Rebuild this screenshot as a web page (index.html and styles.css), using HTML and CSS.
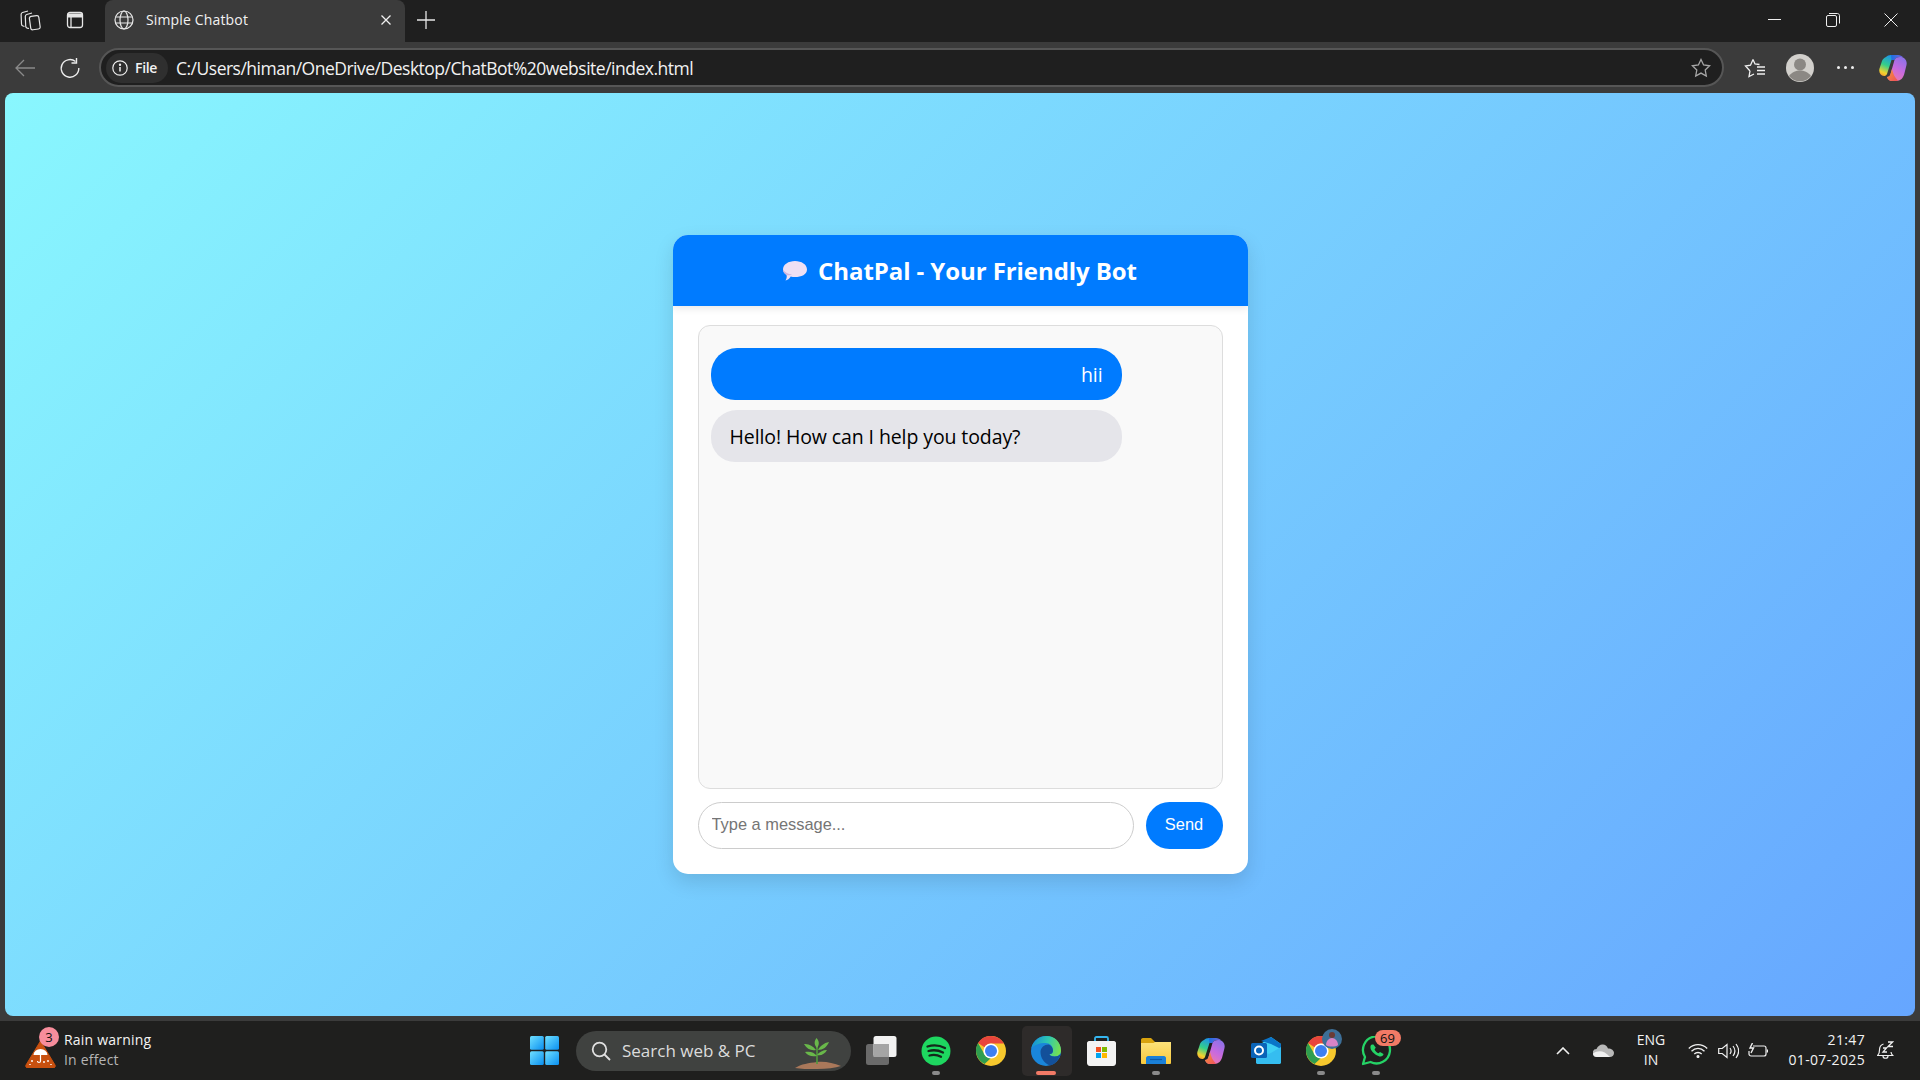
FILE: index.html
```html
<!DOCTYPE html>
<html lang="en">
<head>
<meta charset="utf-8">
<title>Simple Chatbot</title>
<link rel="stylesheet" href="styles.css">
</head>
<body>
<svg class="defs" width="0" height="0" aria-hidden="true">
  <defs>
    <linearGradient id="copA" x1=".6" y1="0" x2=".2" y2="1"><stop offset="0" stop-color="#1c8fee"/><stop offset=".5" stop-color="#34cf8a"/><stop offset=".85" stop-color="#f2d32e"/><stop offset="1" stop-color="#f7a030"/></linearGradient>
    <linearGradient id="copB" x1=".8" y1="0" x2=".3" y2="1"><stop offset="0" stop-color="#8a72e8"/><stop offset=".5" stop-color="#c66ae0"/><stop offset="1" stop-color="#f07aa8"/></linearGradient>
    <linearGradient id="copC" x1="0" y1="0" x2="1" y2="1"><stop offset="0" stop-color="#f79a33"/><stop offset="1" stop-color="#ee4f5e"/></linearGradient>
    <linearGradient id="copD" x1="0" y1="0" x2="1" y2="0"><stop offset="0" stop-color="#1c6fe0"/><stop offset="1" stop-color="#7a62e0"/></linearGradient>
    <linearGradient id="winG" x1="0" y1="0" x2="1" y2="1"><stop offset="0" stop-color="#6fe0ff"/><stop offset="1" stop-color="#0a8ff0"/></linearGradient>
    <linearGradient id="edgeG" x1="0" y1=".4" x2="1" y2=".6"><stop offset="0" stop-color="#1590d8"/><stop offset=".5" stop-color="#2ec8b0"/><stop offset="1" stop-color="#78e04e"/></linearGradient>
    <linearGradient id="foldG" x1="0" y1="0" x2="0" y2="1"><stop offset="0" stop-color="#fde27a"/><stop offset="1" stop-color="#f8c93c"/></linearGradient>
    <symbol id="copilot" viewBox="0 0 28 26">
      <path d="M7 2C8 .8 10 0 12 0H19L12.500 5 8 19C7.200 20.500 6.500 21 5 21 1.500 20.500-.5 17.500.5 13.500L3 6C3.700 4.300 5 3 7 2z" fill="url(#copA)"/>
      <path d="M12 0H19C21 0 23 .8 24.500 3 23 2.300 22 2 21 2 18 2 16.500 3 15.500 5H12.500z" fill="url(#copD)"/>
      <path d="M15.500 5C16.500 3 18 2 21 2 25.500 2 28.500 5.500 27.500 10L25.500 18C24.500 23 21.500 26 17 26H13C10.500 26 9 24.500 8 22 10 22 11 21 11.500 19z" fill="url(#copB)"/>
      <path d="M8 22C10 22 11 21 11.500 19L13 14C14 19 16 23 19 25.500 18 26 17.500 26 17 26H13C10.500 26 9 24.500 8 22z" fill="url(#copC)"/>
    </symbol>
    <symbol id="chrome" viewBox="0 0 30 30">
      <circle cx="15" cy="15" r="15" fill="#f7c82d"/>
      <path d="M15 0a15 15 0 0 1 13 7.500H15a7.500 7.500 0 0 0-6.500 3.750L2 7A15 15 0 0 1 15 0z" fill="#e8453c"/>
      <path d="M2 7l6.500 11.250a7.500 7.500 0 0 0 6.500 3.750L8.500 28A15 15 0 0 1 2 7z" fill="#2f9e4f"/>
      <circle cx="15" cy="15" r="7.600" fill="#fff"/>
      <circle cx="15" cy="15" r="6" fill="#3d7ff0"/>
    </symbol>
  </defs>
</svg>

<header class="tabstrip">
  <div class="strip-left">
    <span class="strip-btn"><svg width="22" height="21" viewBox="0 0 22 21" fill="none" stroke="#e6e6e6" stroke-width="1.200" stroke-linejoin="round"><rect x="11" y="6" width="9.500" height="13.500" rx="2" transform="rotate(-8 15.500 12.500)"/><path d="M10 18.500l-1.800-.4c-1-.3-1.500-1-1.500-2L6.300 6.500c0-1 .4-1.700 1.400-2L13 3"/><path d="M5.500 16.500l-1.500-.5c-1-.3-1.500-1-1.500-2L2.100 4.500c0-1 .4-1.700 1.400-2L9 1"/></svg></span>
    <span class="strip-btn"><svg width="18" height="18" viewBox="0 0 18 18" fill="none" stroke="#e6e6e6" stroke-width="1.300"><rect x="1.500" y="1.500" width="15" height="15" rx="2.500"/><path d="M1.500 4.500h15" stroke-width="4"/><path d="M5 5v11.500"/></svg></span>
  </div>
  <div class="tab">
    <svg class="globe" width="20" height="20" viewBox="0 0 20 20" fill="none" stroke="#e8e8e8" stroke-width="1.200"><circle cx="10" cy="10" r="9"/><ellipse cx="10" cy="10" rx="4" ry="9"/><path d="M1.800 7h16.400M1.800 13h16.400"/></svg>
    <span class="tab-title">Simple Chatbot</span>
    <svg width="12" height="12" viewBox="0 0 12 12" stroke="#f0f0f0" stroke-width="1.300"><path d="M1.500 1.500l9 9M10.500 1.500l-9 9"/></svg>
  </div>
  <span class="newtab"><svg width="18" height="18" viewBox="0 0 18 18" stroke="#e6e6e6" stroke-width="1.300"><path d="M9 0v18M0 9h18"/></svg></span>
  <div class="winctl">
    <span class="winbtn"><svg width="14" height="14" viewBox="0 0 14 14" stroke="#eee" stroke-width="1"><path d="M0 6.500h13"/></svg></span>
    <span class="winbtn"><svg width="14" height="14" viewBox="0 0 14 14" fill="none" stroke="#eee" stroke-width="1"><rect x=".5" y="2.500" width="10" height="11" rx="1.500"/><path d="M3 .5h8.500c1 0 2 1 2 2v8"/></svg></span>
    <span class="winbtn"><svg width="14" height="14" viewBox="0 0 14 14" stroke="#eee" stroke-width="1"><path d="M.5.500l13 13M13.500.500l-13 13"/></svg></span>
  </div>
</header>

<nav class="toolbar">
  <span class="nav-btn"><svg width="20" height="18" viewBox="0 0 20 18" fill="none" stroke="#8a8a8a" stroke-width="1.300"><path d="M20 9H1M9 1L1 9l8 8"/></svg></span>
  <span class="nav-btn"><svg width="22" height="22" viewBox="0 0 22 22" fill="none" stroke="#ececec" stroke-width="1.400"><path d="M16.500 4.500A8.800 8.800 0 1 0 19.800 11"/><path d="M17.500 1v5h-5"/></svg></span>
  <div class="address">
    <span class="chip">
      <svg width="16" height="16" viewBox="0 0 16 16" fill="none" stroke="#eee" stroke-width="1.200"><circle cx="8" cy="8" r="7.200"/><path d="M8 7v4.500" stroke-width="1.500"/><circle cx="8" cy="4.700" r=".6" fill="#eee"/></svg>
      <b class="chip-text">File</b>
    </span>
    <span class="url">C:/Users/himan/OneDrive/Desktop/ChatBot%20website/index.html</span>
    <svg class="star" width="20" height="20" viewBox="0 0 20 20" fill="none" stroke="#a8a8a8" stroke-width="1.300"><path d="M10 1.500l2.600 5.500 6 .8-4.400 4.200 1.100 6L10 15.100 4.700 18l1.100-6L1.400 7.800l6-.8z"/></svg>
  </div>
  <div class="tools">
    <span class="tool tool-fav"><svg width="22" height="20" viewBox="0 0 22 20" fill="none" stroke="#f0f0f0" stroke-width="1.300"><path d="M9 1.500l2 4.500 4.500.5M6 13l-4.500-5 5-.8L9 1.500M6 13l-1 5.500 5-2.500"/><path d="M13 9h8M13 12.500h8M13 16h8"/></svg></span>
    <span class="tool tool-prof"><svg width="28" height="28" viewBox="0 0 28 28"><circle cx="14" cy="14" r="14" fill="#d2d0cc"/><circle cx="14" cy="10.500" r="6" fill="#8b8884"/><path d="M3 22c3-4 7-5.500 11-5.500s8 1.500 11 5.500a14 14 0 0 1-22 0z" fill="#8b8884"/></svg></span>
    <span class="tool tool-more"><i class="dot"></i><i class="dot"></i><i class="dot"></i></span>
    <span class="tool tool-cop"><svg width="28" height="26"><use href="#copilot"/></svg></span>
  </div>
</nav>

<main class="viewport">
  <section class="card">
    <h1 class="card-head">
      <svg class="balloon" width="24" height="20" viewBox="0 0 24 20"><path d="M12 0c6.500 0 12 3.500 12 8.500S18.500 16 12 16c-1.500 0-3-.2-4.300-.6C6.500 17.500 4.500 19 2.500 19.500 3.800 17.500 4 15.500 3.500 14 1.300 12.500 0 10.600 0 8.500 0 3.500 5.500 0 12 0z" fill="#eee0f4"/><path d="M3.500 14C1.300 12.500 0 10.600 0 8.500c2 3 5 4.500 9 5-1 .5-3 1-5.500.5z" fill="#cfb6de"/></svg>
      <span>ChatPal - Your Friendly Bot</span>
    </h1>
    <div class="card-body">
      <div class="messages">
        <div class="bubble bubble-user">hii</div>
        <div class="bubble bubble-bot">Hello! How can I help you today?</div>
      </div>
      <form class="composer">
        <input class="composer-input" type="text" placeholder="Type a message...">
        <button class="composer-send" type="button">Send</button>
      </form>
    </div>
  </section>
</main>

<div class="frame-foot"></div>

<footer class="taskbar">
  <div class="widget">
    <span class="widget-icon">
      <svg width="31" height="28" viewBox="0 0 31 28"><path d="M15.500 1L30 25c.6 1.500 0 3-2 3H3c-2 0-2.600-1.500-2-3z" fill="#c8500f" stroke="#c8500f" stroke-linejoin="round"/><path d="M8.500 15a7 6 0 0 1 14 0z" fill="#fff"/><path d="M15.500 15v6c0 2-3 2-3 0" fill="none" stroke="#fff" stroke-width="1.200"/><path d="M7 20v2M23 20v2M5 24v1M26 24v1M19 21v2" stroke="#fff" stroke-width="1.400"/></svg>
      <span class="widget-badge">3</span>
    </span>
    <span class="widget-text">
      <span class="widget-title">Rain warning</span>
      <span class="widget-sub">In effect</span>
    </span>
  </div>

  <div class="apps">
    <span class="app"><svg width="30" height="30" viewBox="0 0 30 30"><rect width="13.800" height="13.800" rx="1.500" fill="url(#winG)"/><rect x="15.200" width="13.800" height="13.800" rx="1.500" fill="url(#winG)"/><rect y="15.200" width="13.800" height="13.800" rx="1.500" fill="url(#winG)"/><rect x="15.200" y="15.200" width="13.800" height="13.800" rx="1.500" fill="url(#winG)"/></svg></span>
    <div class="search">
      <svg width="20" height="20" viewBox="0 0 20 20" fill="none" stroke="#e0e0e0" stroke-width="1.800"><circle cx="8.500" cy="8.500" r="6.800"/><path d="M13.500 13.500l5.500 5.500"/></svg>
      <span class="search-text">Search web &amp; PC</span>
      <svg class="sprout" width="46" height="32" viewBox="0 0 46 32"><path d="M0 31c6-4 14-5 22-6s16 1 24 4c-6 2-14 3-24 3S6 32 0 31z" fill="#a9785a"/><path d="M22 27V6" stroke="#4f9a3a" stroke-width="1.600"/><path d="M21.500 1c3 3 3 7 .5 10-3-3-3-7-.5-10zM9 7c5-.5 9 2 12 6-5 1-9-1-12-6zM34 5c-5 1-9 4-11 8 5 0 9-3 11-8zM10 15c5-1 9 0 12 4-5 1-9 0-12-4zM32 13c-4 0-8 2-10 5 4 1 8-1 10-5z" fill="#69b84a"/></svg>
    </div>
    <span class="app app-view"><svg width="31" height="29" viewBox="0 0 31 29"><rect x="0" y="8" width="23" height="21" rx="2.500" fill="#6a6a6a"/><rect x="7.500" y="0" width="23" height="21" rx="2.500" fill="#f2f2f2"/><rect x="7.500" y="8" width="15.500" height="13" fill="#a5a5a5"/></svg></span>
    <span class="app"><svg width="30" height="30" viewBox="0 0 30 30"><circle cx="15" cy="15" r="14.500" fill="#1ed760"/><path d="M6.500 10.500c6-1.800 12-1.300 17.500 1.500M7.500 15c5-1.300 10-.8 14.500 1.500M8.500 19.500c4-1 8-.6 11.500 1.300" fill="none" stroke="#14281b" stroke-width="2.300" stroke-linecap="round"/></svg><i class="pip"></i></span>
    <span class="app"><svg width="30" height="30"><use href="#chrome"/></svg></span>
    <span class="app app-active"><svg width="30" height="30" viewBox="0 0 30 30"><circle cx="15" cy="15" r="15" fill="#1a86da"/><path d="M.3 12.500C2 5 8 0 15.500 0 23.500 0 30 6 30 14.500c0 4-3 6-6.500 6-3 0-5-1-5-2.500 2 .5 3.500-1 3.500-3.500C22 10 19 7 14.500 7 8.500 7 2.500 9 .3 12.500z" fill="url(#edgeG)"/><path d="M9.500 16c0-4.500 4-7.500 8-7.500 3 1 4.500 3.500 4.500 6 0 2.500-1.500 4-3.500 3.500 0 1.500 2 2.500 5 2.500 2.500 0 4.500-.8 6.200-2.500C28 24 23.500 28.500 19 29.500 13 27.500 9.500 21.500 9.500 16z" fill="#13509a"/></svg><i class="pip pip-active"></i></span>
    <span class="app"><svg width="29" height="30" viewBox="0 0 29 30"><path d="M8 6V2.500c0-1 .5-1.500 1.500-1.500h10c1 0 1.500.5 1.500 1.500V6" fill="none" stroke="#35b6f0" stroke-width="1.800"/><path d="M2 5h25c1 0 2 1 2 2v20c0 1.500-1 3-3 3H3c-2 0-3-1.500-3-3V7c0-1 1-2 2-2z" fill="#f3f3f3"/><rect x="9" y="11" width="5" height="5" fill="#f25022"/><rect x="15" y="11" width="5" height="5" fill="#7fba00"/><rect x="9" y="17" width="5" height="5" fill="#00a4ef"/><rect x="15" y="17" width="5" height="5" fill="#ffb900"/></svg></span>
    <span class="app"><svg width="30" height="26" viewBox="0 0 30 26"><path d="M0 2c0-1 .5-2 2-2h8l4 4h14c1 0 2 .5 2 2v4H0z" fill="#d9a30e"/><path d="M0 5h12.500L14 4h16v21c0 .5-.5 1-1 1H1c-.5 0-1-.5-1-1z" fill="url(#foldG)"/><path d="M5 26v-6c0-1 1-2 2-2h16c1 0 2 1 2 2v6z" fill="#1a80d8"/><path d="M9 21.500h12" stroke="#0d5aa8" stroke-width="1.200"/></svg><i class="pip"></i></span>
    <span class="app"><svg width="28" height="26"><use href="#copilot"/></svg></span>
    <span class="app"><svg width="31" height="27" viewBox="0 0 31 27"><path d="M5 10L20 0l10 7v18c0 1-1 2-2 2H7c-1 0-2-1-2-2z" fill="#3fd0f5"/><path d="M10 4l10-4 10 7v5l-10-5z" fill="#0a74c8"/><path d="M30 10L18 17 5 12v13c0 1 1 2 2 2h21c1 0 2-1 2-2z" fill="#35bdf0"/><rect x="0" y="6" width="16" height="15" rx="1.500" fill="#0a64b8"/><circle cx="8" cy="13.500" r="4" fill="none" stroke="#fff" stroke-width="2"/></svg></span>
    <span class="app"><svg width="30" height="30"><use href="#chrome"/></svg><span class="avatar"><svg width="20" height="20" viewBox="0 0 20 20"><circle cx="10" cy="10" r="10" fill="#3d6f98"/><circle cx="10" cy="6" r="3" fill="#6b3b35"/><path d="M4 16c0-4 3-7 6-7s6 3 6 7c-2 2-10 2-12 0z" fill="#d884c6"/></svg></span><i class="pip"></i></span>
    <span class="app"><svg width="31" height="30" viewBox="0 0 31 30" fill="none"><path d="M2 28l2-7A13.500 13.500 0 1 1 9.500 26z" stroke="#25d366" stroke-width="2.300" stroke-linejoin="round"/><path d="M10 9c-1 1.500-.8 4 1.200 6.500S17 20.500 19.500 20.500c1.500 0 3-1 3-2.500l-3.500-2-1.500 1.300c-1.500-.5-3.500-2.500-4-4l1.300-1.500L12.500 8.500c-1 0-2 0-2.500.5z" fill="#25d366"/></svg><span class="count">69</span><i class="pip"></i></span>
  </div>

  <div class="tray">
    <span class="tray-cell tray-chev"><svg width="14" height="8" viewBox="0 0 14 8" fill="none" stroke="#f0f0f0" stroke-width="1.600"><path d="M1 7l6-6 6 6"/></svg></span>
    <span class="tray-cell tray-cloud"><svg width="21" height="13" viewBox="0 0 21 13"><path d="M4 13a4 4 0 0 1-.5-8C5 1.500 8 0 10 .5c2 0 4 1.500 5 4 3.500 0 6 2 6 4.500s-2 4-4 4z" fill="#b8b8b8"/><path d="M4 13c-2 0-4-1.500-4-3.500 5-3.500 11-3.500 17 3.500z" fill="#f0f0f0"/></svg></span>
    <span class="tray-cell tray-lang"><span>ENG</span><span>IN</span></span>
    <span class="tray-cell tray-net"><svg width="20" height="15" viewBox="0 0 20 15" fill="none" stroke="#f0f0f0" stroke-width="1.300"><path d="M.8 5.500C6 .3 14 .3 19.200 5.500M3.500 8.200C7.200 4.500 12.800 4.500 16.500 8.200M6.300 11c2-2 5.400-2 7.400 0"/><circle cx="10" cy="13.500" r=".9" fill="#f0f0f0"/></svg></span>
    <span class="tray-cell tray-vol"><svg width="21" height="16" viewBox="0 0 21 16" fill="none" stroke="#f0f0f0" stroke-width="1.200"><path d="M.7 5.500h3.500L9 1.500v13l-4.800-4H.7z"/><path d="M12 5c1.300 1.800 1.300 4.200 0 6M15 3c2.300 3 2.300 7 0 10M18 1c3.400 4.500 3.400 9.500 0 14"/></svg></span>
    <span class="tray-cell tray-bat"><svg width="20" height="16" viewBox="0 0 20 16" fill="none" stroke="#f0f0f0" stroke-width="1.200"><path d="M5 3h11c1 0 2 1 2 2v6c0 1-1 2-2 2H3c-1 0-2-1-2-2V8"/><path d="M19.500 6.500v3" stroke-width="1.500"/><path d="M4.500 0L2 5h3.500L3 10" stroke-width="1.400"/></svg></span>
    <span class="tray-cell tray-clock"><span>21:47</span><span>01-07-2025</span></span>
    <span class="tray-cell tray-bell"><svg width="17" height="19" viewBox="0 0 17 19" fill="none" stroke="#f0f0f0" stroke-width="1.200"><path d="M6.500 3C3 4 2.500 7 2.500 9c0 3-.8 4.500-1.800 5.500h15c-1-1-1.500-2-1.700-3.500M6 15c0 3 5 3 5 0"/><path d="M6 7h3.500L6 11h4M11 1h4.500L11 5.500h5" stroke-width="1.300"/></svg></span>
  </div>
</footer>
</body>
</html>
```

FILE: styles.css
```css
* { box-sizing: border-box; }

html, body {
  margin: 0;
  height: 1080px;
  overflow: hidden;
}

body {
  display: flex;
  flex-direction: column;
  background: #3b3b3b;
  font-family: "Open Sans", "Noto Sans", sans-serif;
  color: #fff;
}

.defs { position: absolute; }

/* tab strip */
.tabstrip {
  height: 42px;
  flex: none;
  display: flex;
  align-items: center;
  background: #1f1f1f;
}

.strip-left {
  width: 105px;
  padding-left: 8px;
  padding-bottom: 2px;
  display: flex;
  gap: 1px;
}

.strip-btn {
  width: 44px;
  height: 30px;
  display: flex;
  align-items: center;
  justify-content: center;
}

.tab {
  width: 300px;
  height: 42px;
  background: #3b3b3b;
  border-radius: 8px 8px 0 0;
  display: flex;
  align-items: center;
  padding: 0 13px 3px 9px;
}

.tab-title {
  flex: 1;
  margin-left: 12px;
  font-size: 14px;
  letter-spacing: .15px;
  color: #f2f2f2;
}

.newtab {
  margin-left: 12px;
  padding-bottom: 2px;
  display: flex;
}

.winctl {
  margin-left: auto;
  display: flex;
}

.winbtn {
  width: 58px;
  height: 42px;
  padding-bottom: 2px;
  display: flex;
  align-items: center;
  justify-content: center;
}

/* toolbar */
.toolbar {
  height: 51px;
  flex: none;
  display: flex;
  align-items: center;
  padding: 0 7px 0 3px;
}

.nav-btn {
  width: 44px;
  margin-right: 1px;
  display: flex;
  justify-content: center;
}

.address {
  width: 1625px;
  height: 39px;
  margin-left: 6px;
  border: 2px solid #565656;
  border-radius: 20px;
  background: #1f1f1f;
  display: flex;
  align-items: center;
  padding: 0 11px 0 5px;
}

.chip {
  width: 62px;
  height: 30px;
  border-radius: 15px;
  background: #2f2f2f;
  display: flex;
  align-items: center;
  gap: 7px;
  padding-left: 6px;
}

.chip-text {
  font-size: 14px;
  font-weight: 600;
  letter-spacing: -.3px;
  color: #f2f2f2;
}

.url {
  flex: 1;
  margin-left: 8px;
  font-size: 17.500px;
  letter-spacing: -.5px;
  color: #f2f2f2;
  white-space: nowrap;
}

.tools {
  display: flex;
  align-items: center;
}

.tool {
  display: flex;
  align-items: center;
  justify-content: center;
}

.tool-fav { width: 22px; margin-left: 20px; }
.tool-prof { width: 28px; margin-left: 20px; }
.tool-more { width: 20px; margin-left: 21px; gap: 4px; }
.tool-cop { width: 28px; margin-left: 24px; }

.dot {
  width: 3px;
  height: 3px;
  border-radius: 50%;
  background: #eee;
}

/* page area */
.viewport {
  height: 923px;
  flex: none;
  margin: 0 5px;
  border-radius: 8px;
  background: linear-gradient(135deg, #89f7fe, #66a6ff);
  display: flex;
  align-items: center;
  justify-content: center;
}

.frame-foot {
  height: 5px;
  flex: none;
}

.card {
  width: 575px;
  height: 639px;
  background: #fff;
  border-radius: 15px;
  box-shadow: 0 8px 20px rgba(0, 0, 0, .12);
  display: flex;
  flex-direction: column;
  overflow: hidden;
}

.card-head {
  height: 71px;
  flex: none;
  margin: 0;
  background: #007bff;
  box-shadow: 0 2px 8px rgba(0, 0, 0, .1);
  display: flex;
  align-items: center;
  justify-content: center;
  gap: 11px;
  font-size: 24px;
  font-weight: 700;
  letter-spacing: -.08px;
  color: #fff;
}

.card-body {
  flex: 1;
  display: flex;
  flex-direction: column;
  padding: 19px 25px 25px;
}

.messages {
  flex: 1;
  background: #f9f9f9;
  border: 1px solid #ddd;
  border-radius: 12px;
  padding: 22px 12px;
  display: flex;
  flex-direction: column;
  gap: 10px;
}

.bubble {
  width: 411px;
  height: 52px;
  padding: 1px 19px 0;
  border-radius: 26px 26px 24px 24px;
  font-size: 19.500px;
  line-height: 52px;
  letter-spacing: -.1px;
}

.bubble-user {
  background: #007bff;
  color: #fff;
  text-align: right;
}

.bubble-bot {
  background: #e5e5ea;
  color: #000;
}

.composer {
  margin: 13px 0 0;
  display: flex;
  gap: 12px;
}

.composer-input {
  flex: 1;
  min-width: 0;
  height: 47px;
  padding: 0 13px 2px;
  border: 1px solid #ccc;
  border-radius: 24px;
  background: #fff;
  font-family: "Liberation Sans", Arial, sans-serif;
  font-size: 16.400px;
}

.composer-input::placeholder { color: #757575; }

.composer-send {
  width: 77px;
  height: 47px;
  border: 0;
  border-radius: 24px;
  background: #007bff;
  color: #fff;
  font-family: "Liberation Sans", Arial, sans-serif;
  font-size: 16.400px;
  padding: 0 0 2px;
}

/* taskbar */
.taskbar {
  height: 59px;
  flex: none;
  background: #1f1f1e;
  display: flex;
  align-items: center;
}

.widget {
  width: 517px;
  padding-left: 25px;
  display: flex;
  align-items: center;
  gap: 8px;
}

.widget-icon {
  position: relative;
  display: flex;
  width: 31px;
  height: 28px;
  top: 3px;
}

.widget-badge {
  position: absolute;
  left: 14px;
  top: -13px;
  width: 20px;
  height: 20px;
  border-radius: 50%;
  background: #f78d9c;
  color: #111;
  font-size: 13px;
  line-height: 20px;
  text-align: center;
}

.widget-text {
  display: flex;
  flex-direction: column;
  padding-bottom: 2px;
  font-size: 14px;
  line-height: 20px;
  letter-spacing: .2px;
}

.widget-title { color: #f4f4f4; }
.widget-sub { color: #b5b5b5; }

.apps {
  display: flex;
  align-items: center;
  height: 59px;
}

.app {
  position: relative;
  width: 55px;
  height: 50px;
  display: flex;
  align-items: center;
  justify-content: center;
}

.app-view { margin-left: 2.500px; }

.app-active::before {
  content: "";
  position: absolute;
  left: 3px;
  right: 2px;
  top: 0;
  bottom: 0;
  background: #2e2b2a;
  border-radius: 5px;
}

.app-active > svg { position: relative; }

.pip {
  position: absolute;
  left: 50%;
  bottom: 1px;
  margin-left: -4px;
  width: 8px;
  height: 4px;
  border-radius: 2px;
  background: #8a8a8a;
}

.pip-active {
  margin-left: -10px;
  width: 20px;
  background: #f27a66;
}

.count {
  position: absolute;
  left: 26px;
  top: 4px;
  width: 26px;
  height: 16px;
  border-radius: 8px;
  background: #f27a66;
  color: #111;
  font-size: 13px;
  line-height: 16px;
  text-align: center;
}

.avatar {
  position: absolute;
  left: 28px;
  top: 3px;
  display: flex;
}

.search {
  width: 275px;
  height: 40px;
  margin-left: 4px;
  border-radius: 20px;
  background: #404240;
  display: flex;
  align-items: center;
  padding: 0 10px 0 15px;
}

.search-text {
  flex: 1;
  margin-left: 11px;
  font-size: 17px;
  letter-spacing: 0;
  color: #dcdcdc;
}

.sprout { align-self: flex-end; margin-bottom: 2px; }

.tray {
  margin-left: auto;
  padding-right: 23px;
  display: flex;
  align-items: center;
}

.tray-cell {
  display: flex;
  align-items: center;
  justify-content: center;
}

.tray-chev { width: 30px; }
.tray-cloud { width: 30px; margin-left: 10px; }

.tray-lang {
  width: 40px;
  margin-left: 13px;
  margin-right: 12px;
  padding-bottom: 2px;
  flex-direction: column;
  font-size: 14px;
  line-height: 20px;
  letter-spacing: 0;
  color: #f2f2f2;
}

.tray-net, .tray-vol, .tray-bat { width: 30px; }

.tray-clock {
  width: 92px;
  padding-right: 0;
  padding-bottom: 2px;
  flex-direction: column;
  align-items: flex-end;
  font-size: 14px;
  line-height: 20px;
  letter-spacing: .35px;
  color: #f2f2f2;
}

.tray-bell { width: 24px; margin-left: 8px; }
```
